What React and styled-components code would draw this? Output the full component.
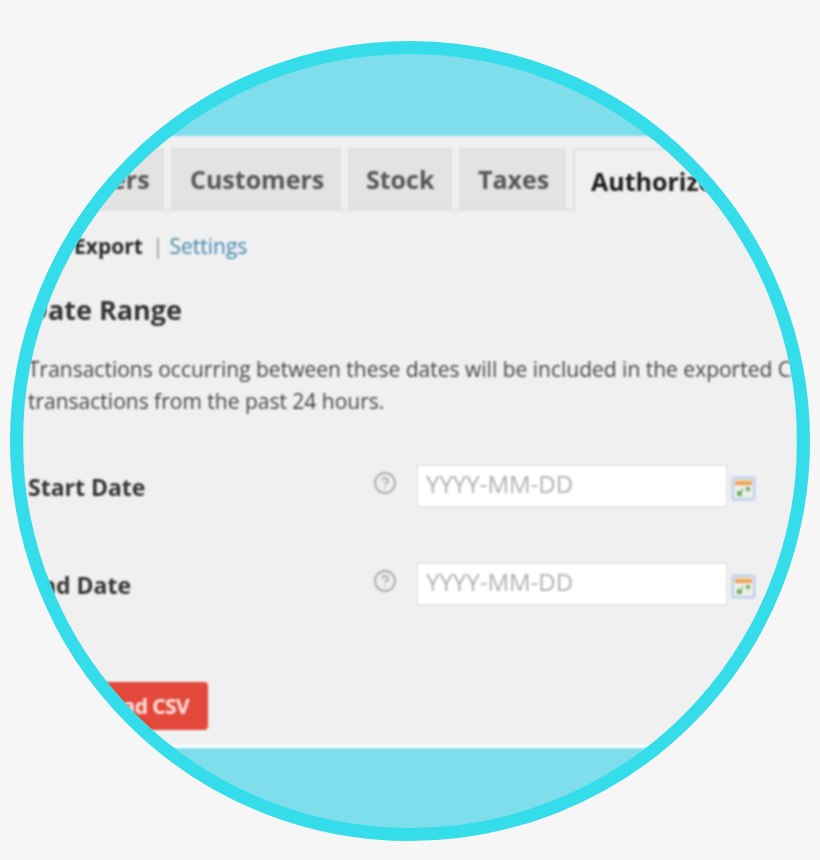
import React from "react";
import styled, { createGlobalStyle } from "styled-components";
import { CircleHelp } from "lucide-react";

const GlobalStyle = createGlobalStyle`
  html, body {
    margin: 0;
    padding: 0;
    background: #f6f6f6;
  }
`;

const Page = styled.div`
  width: 820px;
  height: 860px;
  padding: 41px 0 0 10px;
  box-sizing: border-box;
  overflow: hidden;
`;

const Circle = styled.div`
  width: 800px;
  height: 800px;
  box-sizing: border-box;
  border: 13px solid #34dde9;
  border-radius: 50%;
  background: #7fdeeb;
  overflow: hidden;
  padding-top: 82px;
`;

const Panel = styled.div`
  height: 612px;
  box-sizing: border-box;
  padding: 12px 0 0 5px;
  background: #f0f0f0;
  border-bottom: 3px solid #ffffff;
  font-family: "Open Sans", "Noto Sans", sans-serif;
  color: #3a3a3a;
  filter: blur(0.8px);
  overflow: hidden;
`;

const Tabs = styled.div`
  display: flex;
  gap: 7px;
  height: 63px;
  width: 900px;
  box-sizing: border-box;
  border-bottom: 2px solid #e2e2e2;
`;

const Tab = styled.div`
  height: ${(p) => (p.$active ? "63px" : "61px")};
  width: ${(p) => p.$width}px;
  flex: none;
  box-sizing: border-box;
  padding-left: ${(p) => p.$pad}px;
  display: flex;
  align-items: center;
  font-size: 25px;
  font-weight: 700;
  white-space: nowrap;
  border: 2px solid ${(p) => (p.$active ? "#e2e2e2" : "#e0e0e0")};
  border-bottom: ${(p) => (p.$active ? "none" : undefined)};
  background: ${(p) => (p.$active ? "#f0f0f0" : "#e3e3e3")};
  color: ${(p) => (p.$active ? "#1c1c1c" : "#555555")};
`;

const SubNav = styled.div`
  display: flex;
  align-items: center;
  height: 36px;
  margin-top: 17px;
  padding-left: 2px;
  font-size: 21px;
  white-space: nowrap;
`;

const CurrentLink = styled.span`
  font-weight: 700;
  color: #2a2a2a;
`;

const Divider = styled.span`
  margin: 0 6px 0 9px;
  color: #8a9a9a;
`;

const SubLink = styled.span`
  color: #3f87ab;
`;

const Heading = styled.h2`
  margin: 26px 0 0;
  font-size: 27px;
  line-height: 40px;
  font-weight: 700;
  color: #333333;
  white-space: nowrap;
`;

const Description = styled.p`
  margin: 23px 0 0;
  font-size: 21px;
  line-height: 32px;
  color: #444444;
  white-space: nowrap;
`;

const FormRow = styled.div`
  display: flex;
  align-items: center;
  height: 44px;
  margin-top: ${(p) => p.$top}px;
`;

const Label = styled.div`
  width: 346px;
  flex: none;
  font-size: 23px;
  font-weight: 700;
  color: #333333;
  padding-top: 2px;
`;

const Help = styled(CircleHelp)`
  width: 24px;
  height: 24px;
  flex: none;
  color: #a9a9a9;
  margin: -6px 19px 0 -1px;
`;

const Input = styled.div`
  width: 312px;
  height: 44px;
  flex: none;
  box-sizing: border-box;
  padding: 0 0 6px 8px;
  display: flex;
  align-items: center;
  background: #ffffff;
  border: 2px solid #e6e6e6;
  font-size: 24px;
  color: #b0b0b0;
`;

const CalendarIcon = styled.svg`
  width: 25px;
  height: 25px;
  flex: none;
  margin: 4px 0 0 3px;
`;

const DownloadButton = styled.div`
  width: 180px;
  height: 48px;
  box-sizing: border-box;
  margin-top: 76px;
  padding-right: 19px;
  display: flex;
  align-items: center;
  justify-content: flex-end;
  background: #e3493a;
  border-radius: 4px;
  font-size: 21px;
  font-weight: 700;
  letter-spacing: -0.6px;
  color: #fbe3df;
  white-space: nowrap;
`;

const tabs = [
  { label: "Orders", width: 136, pad: 34 },
  { label: "Customers", width: 170, pad: 17 },
  { label: "Stock", width: 104, pad: 16 },
  { label: "Taxes", width: 107, pad: 17 },
  { label: "Authorize.net", width: 240, pad: 16, active: true },
];

const Calendar = () => (
  <CalendarIcon viewBox="0 0 25 25">
    <rect x="0.5" y="0.5" width="24" height="24" rx="3" fill="#bcd0f2" />
    <rect x="3" y="3" width="19" height="19" fill="#eef0e8" />
    <rect x="4" y="4" width="17" height="2" fill="#f3c47e" />
    <rect x="4" y="6" width="17" height="3" fill="#ef9a55" />
    <rect x="6" y="15" width="5" height="5" fill="#6fb36a" />
    <rect x="15" y="11" width="4" height="4" fill="#6fb36a" />
    <rect x="10" y="12" width="3" height="3" fill="#b7d3b0" />
  </CalendarIcon>
);

const DateRow = ({ label, top }) => (
  <FormRow $top={top}>
    <Label>{label}</Label>
    <Help strokeWidth={1.8} />
    <Input>YYYY-MM-DD</Input>
    <Calendar />
  </FormRow>
);

const App = () => (
  <>
    <GlobalStyle />
    <Page>
      <Circle>
        <Panel>
          <Tabs>
            {tabs.map((tab) => (
              <Tab key={tab.label} $width={tab.width} $pad={tab.pad} $active={tab.active}>
                {tab.label}
              </Tab>
            ))}
          </Tabs>
          <SubNav>
            <CurrentLink>CSV Export</CurrentLink>
            <Divider>|</Divider>
            <SubLink>Settings</SubLink>
          </SubNav>
          <Heading>Date Range</Heading>
          <Description>
            Transactions occurring between these dates will be included in the exported CSV. Leave blank to export
            <br />
            transactions from the past 24 hours.
          </Description>
          <DateRow label="Start Date" top={47} />
          <DateRow label="End Date" top={54} />
          <DownloadButton>Download CSV</DownloadButton>
        </Panel>
      </Circle>
    </Page>
  </>
);

export default App;
